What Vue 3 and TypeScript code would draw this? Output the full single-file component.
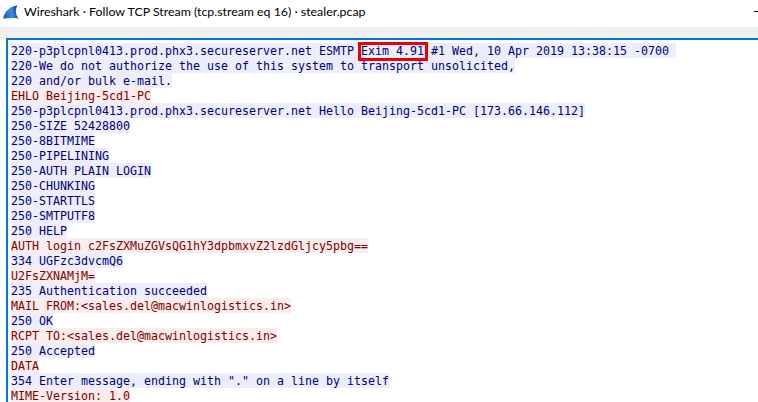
<script setup lang="ts">
type Line = { text: string; side: 'c' | 's'; mark?: [string, string, string] }
const lines: Line[] = [
  { side: 's', text: '', mark: ['220-p3plcpnl0413.prod.phx3.secureserver.net ESMTP ', 'Exim 4.91', ' #1 Wed, 10 Apr 2019 13:38:15 -0700 '] },
  { side: 's', text: '220-We do not authorize the use of this system to transport unsolicited,' },
  { side: 's', text: '220 and/or bulk e-mail.' },
  { side: 'c', text: 'EHLO Beijing-5cd1-PC' },
  { side: 's', text: '250-p3plcpnl0413.prod.phx3.secureserver.net Hello Beijing-5cd1-PC [173.66.146.112]' },
  { side: 's', text: '250-SIZE 52428800' },
  { side: 's', text: '250-8BITMIME' },
  { side: 's', text: '250-PIPELINING' },
  { side: 's', text: '250-AUTH PLAIN LOGIN' },
  { side: 's', text: '250-CHUNKING' },
  { side: 's', text: '250-STARTTLS' },
  { side: 's', text: '250-SMTPUTF8' },
  { side: 's', text: '250 HELP' },
  { side: 'c', text: 'AUTH login c2FsZXMuZGVsQG1hY3dpbmxvZ2lzdGljcy5pbg==' },
  { side: 's', text: '334 UGFzc3dvcmQ6' },
  { side: 'c', text: 'U2FsZXNAMjM=' },
  { side: 's', text: '235 Authentication succeeded' },
  { side: 'c', text: 'MAIL FROM:<sales.del@macwinlogistics.in>' },
  { side: 's', text: '250 OK' },
  { side: 'c', text: 'RCPT TO:<sales.del@macwinlogistics.in>' },
  { side: 's', text: '250 Accepted' },
  { side: 'c', text: 'DATA' },
  { side: 's', text: '354 Enter message, ending with "." on a line by itself' },
  { side: 'c', text: 'MIME-Version: 1.0' },
]
</script>

<template>
  <div class="window">
    <header class="titlebar">
      <svg class="logo" width="16" height="14" viewBox="0 0 16 14">
        <defs>
          <linearGradient id="fin" x1="0" y1="0.7" x2="1" y2="0.5">
            <stop offset="0" stop-color="#1a62bc" />
            <stop offset="0.55" stop-color="#3f8be0" />
            <stop offset="0.8" stop-color="#1c5fb0" />
            <stop offset="1" stop-color="#0e3a80" />
          </linearGradient>
        </defs>
        <path d="M0.200 13.800 C0.800 7.500 6 1.500 14.500 0.200 C12.200 4 12.200 10 15.800 13.500 C10.500 12.900 5 13 0.200 13.800 Z" fill="url(#fin)" />
      </svg>
      <span class="title">Wireshark · Follow TCP Stream (tcp.stream eq 16) · stealer.pcap</span>
      <span class="close"></span>
    </header>
    <div class="band"></div>
    <main class="stream">
      <div v-for="(l, i) in lines" :key="i" class="row">
        <span class="seg" :class="l.side">
          <template v-if="l.mark">{{ l.mark[0] }}<span class="mark">{{ l.mark[1] }}</span>{{ l.mark[2] }}</template>
          <template v-else>{{ l.text }}</template>
        </span>
      </div>
    </main>
  </div>
</template>

<style>
html, body { margin: 0; background: #fff; overflow: hidden; }
</style>

<style scoped>
.window {
  width: 758px;
  height: 402px;
  overflow: hidden;
  background: #fff;
  display: flex;
  flex-direction: column;
}
.titlebar {
  height: 27px;
  flex: none;
  display: flex;
  align-items: center;
  padding-left: 3px;
  gap: 5px;
  position: relative;
  font: 12.35px/16px Lato, Roboto, sans-serif;
  color: #000;
}
.logo { flex: none; margin-top: -3px; }
.title { white-space: nowrap; margin-top: -3px; }
.close {
  position: absolute;
  right: 0;
  top: 11px;
  width: 4px;
  height: 1px;
  background: #000;
}
.band {
  height: 11px;
  flex: none;
  background: #f0f0f0;
}
.stream {
  flex: 1;
  min-height: 0;
  margin-left: 6px;
  border-left: 2px solid #0078d7;
  border-top: 2px solid #0078d7;
  padding: 3px 0 0 3px;
  font: 11.63px/15px "DejaVu Sans Mono", monospace;
}
.row { height: 15px; white-space: pre; }
.seg { display: inline-block; box-sizing: border-box; height: 15px; padding-top: 1px; }
.seg.s { background: #ededfb; color: #00007f; }
.seg.c { background: #fbeded; color: #7f0000; }
.mark { position: relative; }
.mark::after {
  content: "";
  position: absolute;
  left: -3px;
  right: -4px;
  top: -2px;
  bottom: -3px;
  border: 3px solid #f00000;
}
</style>
